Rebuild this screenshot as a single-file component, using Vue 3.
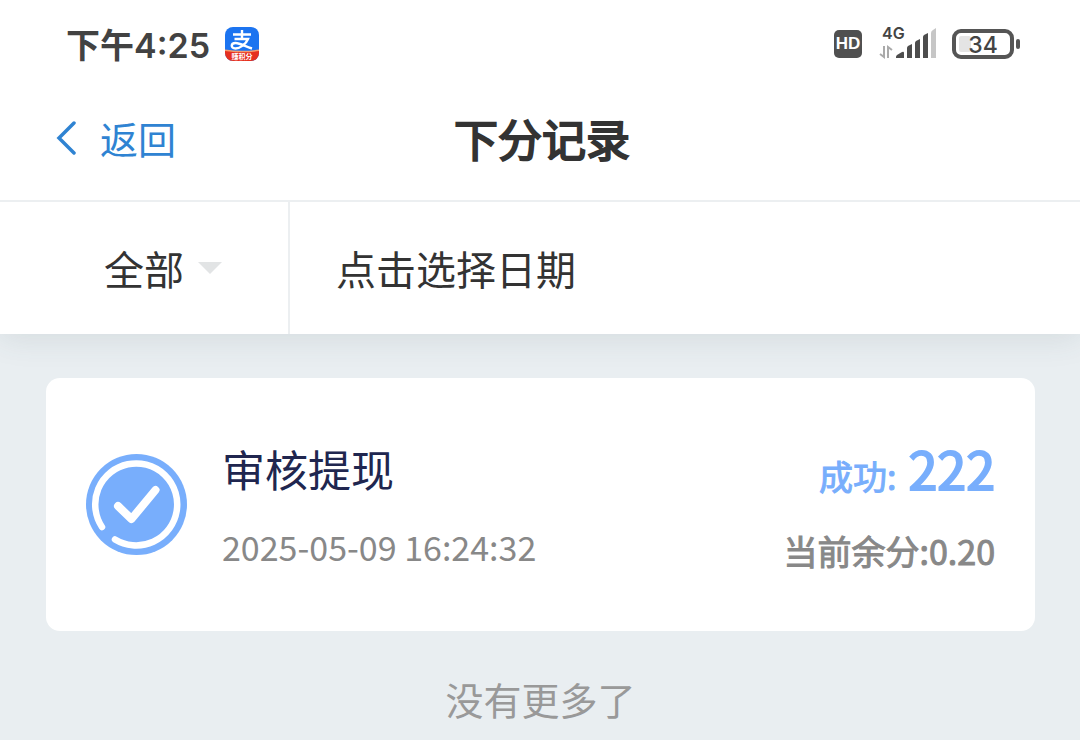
<script setup>
import { ref } from 'vue'

const filter = ref('all')
const filters = [
  { value: 'all', label: '全部' },
  { value: 'ok', label: '成功' },
  { value: 'fail', label: '失败' },
]
const records = [
  { id: 1, title: '审核提现', time: '2025-05-09 16:24:32', status: '成功:', amount: '222', balance: '当前余分:0.20' },
]
</script>

<template>
  <div class="page">
    <div class="status">
      <span class="clock">下午4:25</span>
      <svg class="app" viewBox="0 0 34 34" aria-hidden="true">
        <defs>
          <clipPath id="tile"><rect width="34" height="34" rx="8" /></clipPath>
        </defs>
        <g clip-path="url(#tile)">
          <rect width="34" height="34" fill="#1c74f0" />
          <path d="M0 23Q17 26 34 23V34H0Z" fill="#e6301f" />
          <path d="M0 22.500Q17 25 34 22.500V24Q17 26.500 0 24Z" fill="#f79a6c" />
        </g>
        <path d="M8 7.500H26M17 3V12M9.500 12H23C21 17 15 21.500 10.500 21.500C5.500 21.500 5.500 16 10.500 16C15.500 16 20 19.500 27 21.500" fill="none" stroke="#fff" stroke-width="2.400" />
        <text x="17" y="32" class="ribbon">赚积分</text>
      </svg>
      <div class="indicators">
        <span class="hd">HD</span>
        <svg class="signal" viewBox="0 -4 58 38" aria-hidden="true">
          <text x="3" y="13" class="net">4G</text>
          <g fill="none" stroke="#aaa" stroke-width="2">
            <path d="M5 20V31L1 28" />
            <path d="M9 32V21L13 24" />
          </g>
          <g fill="#4d4d4d">
            <path d="M17 32V31Q17 30 18 29L23 26Q25 25 25 27V32Z" />
            <path d="M28 32V22Q28 21 29 20L33 18V32Z" />
            <path d="M36 32V17Q36 16 37 15L41 13V32Z" />
            <path d="M44 32V11Q44 10 45 9L49 7V32Z" />
          </g>
          <path d="M52 32V7Q52 5 54 4L57 2V32Z" fill="#c6c6c6" />
        </svg>
        <svg class="battery" viewBox="0 0 68 30" aria-hidden="true">
          <rect x="2" y="2" width="58" height="26" rx="7" fill="#fff" stroke="#555" stroke-width="4" />
          <rect x="7" y="7" width="12" height="16" rx="2" fill="#e4e4e4" />
          <rect x="64" y="10" width="4" height="10" rx="2" fill="#555" />
          <text x="31" y="24" class="level">34</text>
        </svg>
      </div>
    </div>

    <header class="nav">
      <button class="back" type="button">
        <svg viewBox="0 0 20 34" aria-hidden="true">
          <path d="M18 2L3 17L18 32" fill="none" stroke="#2f83d2" stroke-width="3.500" stroke-linecap="round" />
        </svg>
        <span>返回</span>
      </button>
      <h1>下分记录</h1>
    </header>

    <div class="filters">
      <div class="type">
        <select v-model="filter" aria-label="类型">
          <option v-for="f in filters" :key="f.value" :value="f.value">{{ f.label }}</option>
        </select>
        <svg viewBox="0 0 24 12" aria-hidden="true"><path d="M0 0H24L12 12Z" fill="#e2e4e5" /></svg>
      </div>
      <button class="date" type="button">点击选择日期</button>
    </div>

    <main>
      <article v-for="r in records" :key="r.id" class="card">
        <svg class="mark" viewBox="0 0 102 102" aria-hidden="true">
          <circle cx="50.500" cy="51.500" r="50.500" fill="#78aefc" />
          <g fill="none" stroke="#fff" stroke-linecap="round" stroke-linejoin="round">
            <path d="M16 74A41 41 0 1 1 29 86.500" stroke-width="6.500" />
            <path d="M32 53L45.500 66L69.500 37" stroke-width="8" />
          </g>
        </svg>
        <div class="info">
          <h2>{{ r.title }}</h2>
          <time>{{ r.time }}</time>
        </div>
        <div class="result">
          <p class="state"><span>{{ r.status }}</span><strong>{{ r.amount }}</strong></p>
          <p class="balance">{{ r.balance }}</p>
        </div>
      </article>
      <p class="end">没有更多了</p>
    </main>
  </div>
</template>

<style>
body {
  margin: 0;
  background: #e9eef1;
}
</style>

<style scoped>
.page {
  min-height: 100vh;
  display: flex;
  flex-direction: column;
  overflow: hidden;
  background: #e9eef1;
  color: #333;
  font-family: "Noto Sans CJK SC", sans-serif;
}
button,
select {
  margin: 0;
  padding: 0;
  border: 0;
  background: none;
  color: inherit;
  font: inherit;
  cursor: pointer;
}
h1,
h2,
p {
  margin: 0;
  font-weight: 400;
}
svg {
  display: block;
  flex: none;
}
.status {
  position: relative;
  z-index: 1;
  display: flex;
  align-items: center;
  height: 76px;
  padding: 12px 60px 0 66px;
  box-sizing: border-box;
  background: #fff;
}
.clock {
  padding-top: 3px;
  font: 600 34px/44px Inter, "Noto Sans CJK SC", sans-serif;
  color: #424242;
}
.app {
  width: 34px;
  height: 34px;
  margin-left: 15px;
}
.ribbon {
  font: 700 7px "Noto Sans CJK SC", sans-serif;
  fill: #fff;
  text-anchor: middle;
}
.indicators {
  display: flex;
  align-items: center;
  margin-left: auto;
}
.hd {
  width: 28px;
  border-radius: 5px;
  background: #505050;
  color: #fff;
  text-align: center;
  font: 700 17px/28px "Liberation Sans", sans-serif;
}
.signal {
  width: 58px;
  height: 38px;
  margin: 0 15px 7px 17px;
}
.net {
  font: 600 16px Inter, sans-serif;
  fill: #444;
}
.battery {
  width: 68px;
  height: 30px;
}
.level {
  font: 500 23px Inter, sans-serif;
  fill: #444;
  text-anchor: middle;
}
.nav {
  position: relative;
  z-index: 1;
  display: grid;
  grid-template-columns: 1fr auto 1fr;
  align-items: center;
  height: 124px;
  background: #fff;
  border-bottom: 2px solid #eceff1;
}
.back {
  justify-self: start;
  display: flex;
  align-items: center;
  gap: 24px;
  padding-left: 56px;
  color: #2f83d2;
  font-size: 38px;
  line-height: 56px;
}
.back svg {
  width: 20px;
  height: 34px;
}
h1 {
  padding-left: 4px;
  font-size: 44px;
  line-height: 64px;
  -webkit-text-stroke: 2px #333;
}
.filters {
  display: flex;
  height: 132px;
  background: #fff;
  box-shadow: 0 4px 30px rgba(60, 80, 90, 0.12);
  font-size: 40px;
}
.type {
  display: flex;
  align-items: center;
  gap: 14px;
  width: 290px;
  box-sizing: border-box;
  padding-left: 104px;
  border-right: 2px solid #eceff1;
}
select {
  appearance: none;
  width: 80px;
  line-height: 60px;
}
.type svg {
  width: 24px;
  height: 12px;
}
.date {
  flex: 1;
  padding-left: 46px;
  text-align: left;
}
main {
  padding: 44px 45px 0 46px;
}
.card {
  display: flex;
  align-items: center;
  min-height: 253px;
  box-sizing: border-box;
  padding: 0 40px 2px;
  border-radius: 14px;
  background: #fff;
}
.mark {
  width: 102px;
  height: 102px;
}
.info {
  flex: 1;
  margin-left: 34px;
}
h2 {
  font-size: 43px;
  line-height: 64px;
  color: #20264f;
}
time {
  display: block;
  margin-top: 22px;
  font-size: 34px;
  line-height: 50px;
  color: #888;
}
.result {
  padding-bottom: 2px;
  text-align: right;
  font-size: 34px;
}
.state {
  color: #78aefc;
  line-height: 76px;
  -webkit-text-stroke: 1px #78aefc;
}
.state strong {
  margin-left: 12px;
  font-size: 52px;
  font-weight: 400;
  -webkit-text-stroke: 2px #78aefc;
}
.balance {
  margin-top: 12px;
  line-height: 50px;
  color: #888;
  -webkit-text-stroke: 1px #888;
}
.end {
  margin-top: 40px;
  text-align: center;
  font-size: 38px;
  line-height: 56px;
  color: #999;
}
</style>
